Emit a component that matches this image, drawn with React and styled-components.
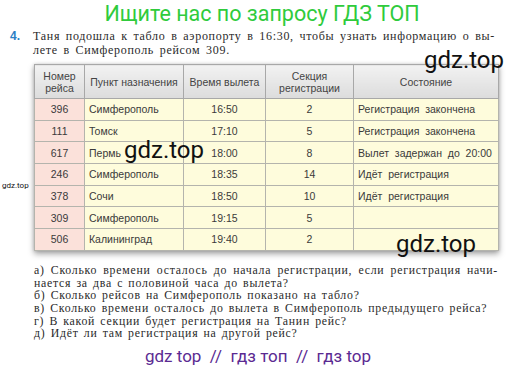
import styled, { createGlobalStyle } from "styled-components";

const GlobalStyle = createGlobalStyle`
  body {
    margin: 0;
    background: #ffffff;
  }
`;

const Page = styled.div`
  position: relative;
  width: 518px;
  height: 370px;
  overflow: hidden;
  background: #ffffff;
`;

const Banner = styled.div`
  height: 28px;
  padding-top: 1px;
  padding-left: 6px;
  text-align: center;
  font-family: Roboto, "Liberation Sans", sans-serif;
  font-size: 21.5px;
  line-height: 26px;
  color: #2fcb3c;
`;

const Task = styled.div`
  display: flex;
  padding-left: 10px;
`;

const TaskNumber = styled.div`
  width: 23px;
  flex-shrink: 0;
  font-family: "Liberation Sans", Arial, sans-serif;
  font-weight: bold;
  font-size: 12px;
  line-height: 14px;
  color: #2b7fc4;
`;

const TaskText = styled.div`
  width: 462px;
  font-family: "Liberation Serif", "Times New Roman", serif;
  font-size: 12px;
  line-height: 14px;
  color: #2a2a2a;
  letter-spacing: 0.7px;
  word-spacing: 2px;
`;

const Line = styled.span`
  display: block;
  white-space: nowrap;
  text-align: ${(p) => (p.justify ? "justify" : "left")};
  text-align-last: ${(p) => (p.justify ? "justify" : "left")};
`;

const Board = styled.table`
  margin: 7px 0 0 34px;
  width: 464px;
  border-collapse: collapse;
  table-layout: fixed;
  font-family: "Liberation Sans", Arial, sans-serif;
  font-size: 10.5px;
  color: #3a3a3a;
  box-shadow: 0 3px 6px rgba(0, 0, 0, 0.35), 0 0 3px rgba(0, 0, 0, 0.15);
`;

const HeadCell = styled.th`
  height: 33px;
  padding: 0 2px;
  font-weight: normal;
  line-height: 12px;
  color: #444;
  text-align: center;
  background: linear-gradient(#f2f2f2, #dcdcdc);
  border: 1px solid #a8a8a8;
`;

const Cell = styled.td`
  height: 20.7px;
  padding: 0 4px;
  white-space: pre;
  text-align: ${(p) => (p.center ? "center" : "left")};
  background: ${(p) => (p.pink ? "#fbe1da" : "#fefcdc")};
  border: 1px solid #b4b4ad;
`;

const Questions = styled.div`
  margin: 13px 0 0 34px;
  width: 464px;
  font-family: "Liberation Serif", "Times New Roman", serif;
  font-size: 11.8px;
  line-height: 12.7px;
  color: #2a2a2a;
  letter-spacing: 0.75px;
  word-spacing: 1.5px;
`;

const Footer = styled.div`
  margin-top: 6px;
  padding-right: 2px;
  text-align: center;
  font-family: Roboto, "Liberation Sans", sans-serif;
  font-size: 17px;
  line-height: 20px;
  color: #5b2a92;
  white-space: pre;
`;

const Watermark = styled.div`
  position: absolute;
  left: ${(p) => p.x}px;
  top: ${(p) => p.y}px;
  font-family: Roboto, "Liberation Sans", sans-serif;
  font-size: ${(p) => p.size}px;
  line-height: 1;
  color: #111;
  white-space: nowrap;
`;

const flights = [
  ["396", "Симферополь", "16:50", "2", "Регистрация  закончена"],
  ["111", "Томск", "17:10", "5", "Регистрация  закончена"],
  ["617", "Пермь", "18:00", "8", "Вылет  задержан  до  20:00"],
  ["246", "Симферополь", "18:35", "14", "Идёт  регистрация"],
  ["378", "Сочи", "18:50", "10", "Идёт  регистрация"],
  ["309", "Симферополь", "19:15", "5", ""],
  ["506", "Калининград", "19:40", "2", ""],
];

const questions = [
  "а) Сколько времени осталось до начала регистрации, если регистрация начи-",
  "нается за два с половиной часа до вылета?",
  "б) Сколько рейсов на Симферополь показано на табло?",
  "в) Сколько времени осталось до вылета в Симферополь предыдущего рейса?",
  "г) В какой секции будет регистрация на Танин рейс?",
  "д) Идёт ли там регистрация на другой рейс?",
];

export default function App() {
  return (
    <Page>
      <GlobalStyle />
      <Banner>Ищите нас по запросу ГДЗ ТОП</Banner>
      <Task>
        <TaskNumber>4.</TaskNumber>
        <TaskText>
          <Line justify>
            Таня подошла к табло в аэропорту в 16:30, чтобы узнать информацию о вы-
          </Line>
          <Line>лете в Симферополь рейсом 309.</Line>
        </TaskText>
      </Task>
      <Board>
        <colgroup>
          <col style={{ width: 50 }} />
          <col style={{ width: 99 }} />
          <col style={{ width: 82 }} />
          <col style={{ width: 88 }} />
          <col style={{ width: 145 }} />
        </colgroup>
        <thead>
          <tr>
            <HeadCell>
              Номер
              <br />
              рейса
            </HeadCell>
            <HeadCell>Пункт назначения</HeadCell>
            <HeadCell>Время вылета</HeadCell>
            <HeadCell>
              Секция
              <br />
              регистрации
            </HeadCell>
            <HeadCell>Состояние</HeadCell>
          </tr>
        </thead>
        <tbody>
          {flights.map((f) => (
            <tr key={f[0]}>
              <Cell pink center>
                {f[0]}
              </Cell>
              <Cell>{f[1]}</Cell>
              <Cell center>{f[2]}</Cell>
              <Cell center>{f[3]}</Cell>
              <Cell>{f[4]}</Cell>
            </tr>
          ))}
        </tbody>
      </Board>
      <Questions>
        {questions.map((q, i) => (
          <Line key={i} justify={i === 0}>
            {q}
          </Line>
        ))}
      </Questions>
      <Footer>{"gdz top  //  гдз топ  //  гдз top"}</Footer>
      <Watermark x={424} y={48} size={24}>gdz.top</Watermark>
      <Watermark x={124} y={138} size={24}>gdz.top</Watermark>
      <Watermark x={2} y={182} size={8}>gdz.top</Watermark>
      <Watermark x={396} y={232} size={24}>gdz.top</Watermark>
    </Page>
  );
}
